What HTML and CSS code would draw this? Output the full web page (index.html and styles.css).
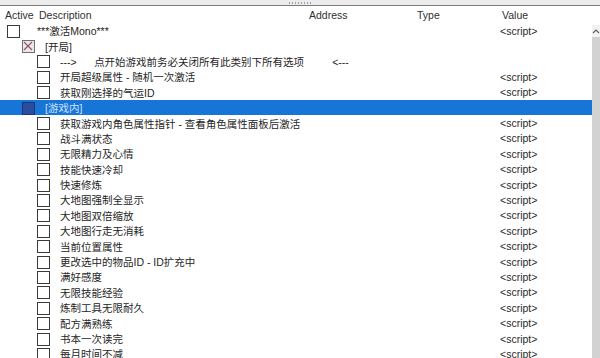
FILE: index.html
```html
<!DOCTYPE html>
<html>
<head>
<meta charset="utf-8">
<link rel="stylesheet" href="styles.css">
</head>
<body>
<div class="app">
  <div class="topbar"><span class="grip"></span></div>
  <div class="header">
    <div class="h h-active">Active</div>
    <div class="h">Description</div>
    <div class="h h-addr">Address</div>
    <div class="h h-type">Type</div>
    <div class="h h-val">Value</div>
  </div>
  <div class="main">
    <div class="list">
      <div class="row"><div class="desc l0"><span class="cb"></span><span class="txt first">***激活Mono***</span></div><div class="val">&lt;script&gt;</div></div>
      <div class="row"><div class="desc l1"><span class="cb x"><svg viewBox="0 0 12 12" width="12" height="12"><path d="M2 2 L10 10 M10 2 L2 10" stroke="#8a5a6e" stroke-width="1.2" fill="none"/></svg></span><span class="txt">[开局]</span></div><div class="val"></div></div>
      <div class="row"><div class="desc l2"><span class="cb"></span><span class="txt">--->      点开始游戏前务必关闭所有此类别下所有选项<span class="gap"></span>&lt;---</span></div><div class="val"></div></div>
      <div class="row"><div class="desc l2"><span class="cb"></span><span class="txt">开局超级属性 - 随机一次激活</span></div><div class="val">&lt;script&gt;</div></div>
      <div class="row"><div class="desc l2"><span class="cb"></span><span class="txt">获取刚选择的气运ID</span></div><div class="val">&lt;script&gt;</div></div>
      <div class="row sel"><div class="desc l1"><span class="cb dark"></span><span class="txt">[游戏内]</span></div><div class="val"></div></div>
      <div class="row"><div class="desc l2"><span class="cb"></span><span class="txt">获取游戏内角色属性指针 - 查看角色属性面板后激活</span></div><div class="val">&lt;script&gt;</div></div>
      <div class="row"><div class="desc l2"><span class="cb"></span><span class="txt">战斗满状态</span></div><div class="val">&lt;script&gt;</div></div>
      <div class="row"><div class="desc l2"><span class="cb"></span><span class="txt">无限精力及心情</span></div><div class="val">&lt;script&gt;</div></div>
      <div class="row"><div class="desc l2"><span class="cb"></span><span class="txt">技能快速冷却</span></div><div class="val">&lt;script&gt;</div></div>
      <div class="row"><div class="desc l2"><span class="cb"></span><span class="txt">快速修炼</span></div><div class="val">&lt;script&gt;</div></div>
      <div class="row"><div class="desc l2"><span class="cb"></span><span class="txt">大地图强制全显示</span></div><div class="val">&lt;script&gt;</div></div>
      <div class="row"><div class="desc l2"><span class="cb"></span><span class="txt">大地图双倍缩放</span></div><div class="val">&lt;script&gt;</div></div>
      <div class="row"><div class="desc l2"><span class="cb"></span><span class="txt">大地图行走无消耗</span></div><div class="val">&lt;script&gt;</div></div>
      <div class="row"><div class="desc l2"><span class="cb"></span><span class="txt">当前位置属性</span></div><div class="val">&lt;script&gt;</div></div>
      <div class="row"><div class="desc l2"><span class="cb"></span><span class="txt">更改选中的物品ID - ID扩充中</span></div><div class="val">&lt;script&gt;</div></div>
      <div class="row"><div class="desc l2"><span class="cb"></span><span class="txt">满好感度</span></div><div class="val">&lt;script&gt;</div></div>
      <div class="row"><div class="desc l2"><span class="cb"></span><span class="txt">无限技能经验</span></div><div class="val">&lt;script&gt;</div></div>
      <div class="row"><div class="desc l2"><span class="cb"></span><span class="txt">炼制工具无限耐久</span></div><div class="val">&lt;script&gt;</div></div>
      <div class="row"><div class="desc l2"><span class="cb"></span><span class="txt">配方满熟练</span></div><div class="val">&lt;script&gt;</div></div>
      <div class="row"><div class="desc l2"><span class="cb"></span><span class="txt">书本一次读完</span></div><div class="val">&lt;script&gt;</div></div>
      <div class="row"><div class="desc l2"><span class="cb"></span><span class="txt">每月时间不减</span></div><div class="val">&lt;script&gt;</div></div>
    </div>
    <div class="scroll">
      <div class="arrow"><svg viewBox="0 0 8 6" width="8" height="6"><path d="M1 5 L4 2 L7 5" stroke="#606060" stroke-width="1.2" fill="none"/></svg></div>
      <div class="track"></div>
    </div>
  </div>
</div>
</body>
</html>
```

FILE: styles.css
```css
html, body {
  margin: 0;
  padding: 0;
  background: #ffffff;
  overflow: hidden;
}
body {
  font-family: "Liberation Sans", "Noto Sans CJK SC", sans-serif;
  font-size: 10.5px;
  color: #262626;
}
.app {
  width: 600px;
  height: 358px;
  display: flex;
  flex-direction: column;
  overflow: hidden;
}
.topbar {
  height: 5px;
  background: #ececec;
  border-bottom: 1px solid #7a7a7a;
  display: flex;
  justify-content: center;
  align-items: center;
  flex: none;
}
.grip {
  width: 24px;
  height: 2px;
  background-image: radial-gradient(circle, #a0a0a0 0.8px, transparent 1px);
  background-size: 3px 2px;
}
.header {
  height: 17px;
  display: grid;
  grid-template-columns: 37px 269px 108px 85px 1fr;
  align-items: center;
  flex: none;
  color: #303030;
}
.h { padding-left: 2px; white-space: nowrap; }
.h-active { padding-left: 5px; }
.h-addr, .h-type, .h-val { padding-left: 3px; }
.main {
  flex: 1;
  display: flex;
  min-height: 0;
}
.list {
  flex: 1;
  display: flex;
  flex-direction: column;
}
.row {
  height: 15.4px;
  flex: none;
  display: grid;
  grid-template-columns: 500px 1fr;
  align-items: center;
  white-space: pre;
}
.desc {
  display: flex;
  align-items: center;
  gap: 10px;
}
.l0 { padding-left: 7px; }
.l1 { padding-left: 22px; }
.l2 { padding-left: 37px; }
.txt.first { margin-left: 7px; }
.gap { display: inline-block; width: 28px; }
.cb {
  width: 11px;
  height: 11px;
  border: 1px solid #3a3a3a;
  background: #ffffff;
  flex: none;
  display: flex;
  margin-top: 1px;
}
.cb.x {
  background: #efe6ea;
  border-color: #6e6e6e;
}
.cb.x svg { display: block; margin: -1px 0 0 -1px; }
.cb.dark {
  background: #2b4d9e;
  border-color: #1d3576;
}
.row.sel {
  background: #1675d6;
}
.row.sel .txt { color: #cfe2ff; }
.val { color: #2a2a2a; }
.scroll {
  width: 8px;
  flex: none;
  display: flex;
  flex-direction: column;
  margin-top: 2px;
}
.arrow {
  height: 12px;
  background: #f2f2f2;
  display: flex;
  justify-content: center;
  align-items: center;
}
.track {
  flex: 1;
  background: #d2d2d2;
}
```
